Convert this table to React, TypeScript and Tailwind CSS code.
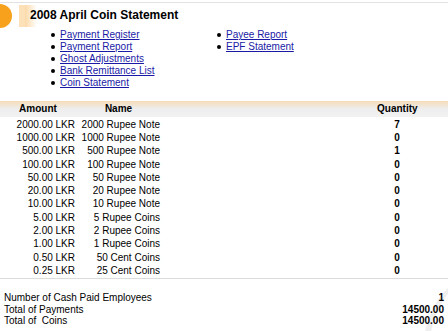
import React from 'react';

const leftLinks = ['Payment Register', 'Payment Report', 'Ghost Adjustments', 'Bank Remittance List', 'Coin Statement'];
const rightLinks = ['Payee Report', 'EPF Statement'];

const rows: [string, string, number][] = [
  ['2000.00 LKR', '2000 Rupee Note', 7],
  ['1000.00 LKR', '1000 Rupee Note', 0],
  ['500.00 LKR', '500 Rupee Note', 1],
  ['100.00 LKR', '100 Rupee Note', 0],
  ['50.00 LKR', '50 Rupee Note', 0],
  ['20.00 LKR', '20 Rupee Note', 0],
  ['10.00 LKR', '10 Rupee Note', 0],
  ['5.00 LKR', '5 Rupee Coins', 0],
  ['2.00 LKR', '2 Rupee Coins', 0],
  ['1.00 LKR', '1 Rupee Coins', 0],
  ['0.50 LKR', '50 Cent Coins', 0],
  ['0.25 LKR', '25 Cent Coins', 0],
];

const totals: [string, string][] = [
  ['Number of Cash Paid Employees', '1'],
  ['Total of Payments', '14500.00'],
  ['Total of  Coins', '14500.00'],
];

const LinkList = ({ items }: { items: string[] }) => (
  <ul className="flex flex-col">
    {items.map((item) => (
      <li key={item} className="flex items-center h-[12px]">
        <span className="w-[4px] h-[4px] rounded-full bg-black mr-[5px]" />
        <a href="#" className="text-[#1a1aa6] underline">{item}</a>
      </li>
    ))}
  </ul>
);

export default function App() {
  return (
    <div className="relative w-[448px] h-[331px] overflow-hidden bg-white text-black font-['Liberation_Sans',Arial,sans-serif] text-[10px] leading-[12px]">
      <div className="mt-[2px] border-t border-[#e2e2e2]" />

      {/* title */}
      <div className="relative h-[24px] flex items-center">
        <svg className="absolute left-0 top-0" width="40" height="26" viewBox="0 0 40 26">
          <defs>
            <linearGradient id="fade" x1="0" x2="1" y1="0" y2="0">
              <stop offset="0" stopColor="#fbd9a8" />
              <stop offset="1" stopColor="#ffffff" />
            </linearGradient>
          </defs>
          <circle cx="0" cy="13" r="12" fill="#f7a11c" />
          <rect x="19" y="2" width="6" height="22" fill="#fce0b8" />
          <rect x="25" y="2" width="12" height="22" fill="url(#fade)" />
        </svg>
        <h1 className="relative pl-[30px] text-[12px] font-bold leading-[16px]">2008 April Coin Statement</h1>
      </div>

      {/* links */}
      <div className="flex pl-[51px] pt-[2px]">
        <div className="w-[166px]">
          <LinkList items={leftLinks} />
        </div>
        <LinkList items={rightLinks} />
      </div>

      {/* table */}
      <div className="mt-[12px]">
        <div className="grid grid-cols-[76px_85px_1fr_40px_31px] h-[16px] items-center font-bold bg-gradient-to-b from-[#f5dcb8] via-[#eeeeee] to-[#f2f2f2]">
          <div className="text-center">Amount</div>
          <div className="text-center">Name</div>
          <div />
          <div className="text-center">Quantity</div>
          <div />
        </div>
        <div className="pt-[1px]">
          {rows.map(([amt, name, qty]) => (
            <div key={name} className="grid grid-cols-[76px_85px_1fr_40px_31px] h-[13.3px] items-center">
              <div className="text-right pr-[1px]">{amt}</div>
              <div className="text-right pr-[1px]">{name}</div>
              <div />
              <div className="text-center font-bold">{qty}</div>
              <div />
            </div>
          ))}
        </div>
      </div>

      <div className="border-t border-[#dcdcdc]" />

      {/* totals */}
      <div className="relative h-[60px]">
        <div className="absolute left-[424px] top-[-14px] w-[160px] h-[160px] rounded-full border-l-[6px] border-t-[2px] border-[#efefef]" />
        <div className="relative pt-[14px] px-[4px]">
          {totals.map(([label, value]) => (
            <div key={label} className="flex justify-between h-[11.5px] items-center whitespace-pre">
              <span>{label}</span>
              <span className="font-bold">{value}</span>
            </div>
          ))}
        </div>
      </div>
    </div>
  );
}
